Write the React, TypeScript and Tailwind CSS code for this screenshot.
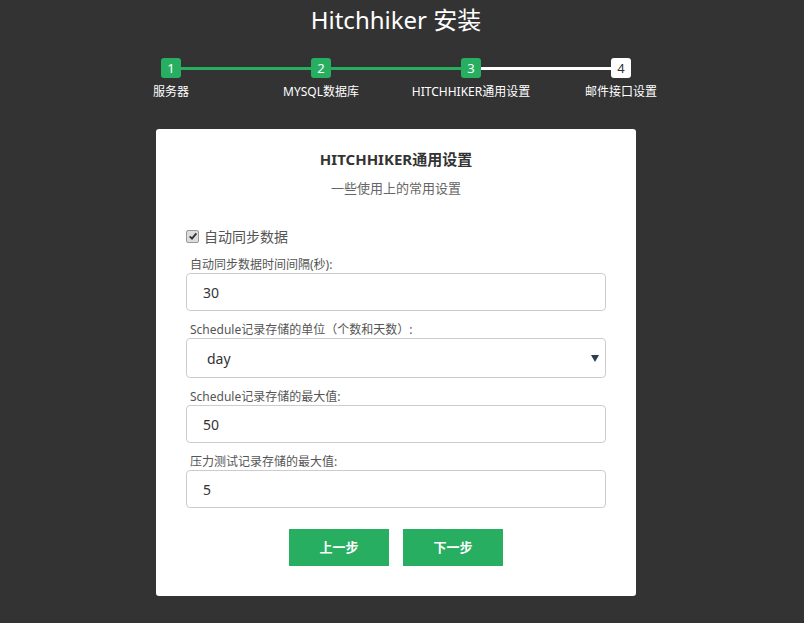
const font = { fontFamily: '"Noto Sans", "Noto Sans CJK SC", sans-serif' };

const steps = [
  { n: 1, label: "服务器", done: true },
  { n: 2, label: "MYSQL数据库", done: true },
  { n: 3, label: "HITCHHIKER通用设置", done: true },
  { n: 4, label: "邮件接口设置", done: false },
];

function StepBox({ n, done }: { n: number; done: boolean }) {
  return (
    <div
      className={`flex h-5 w-5 shrink-0 items-center justify-center rounded-[3px] text-[13px] leading-none ${
        done ? "bg-[#27ae60] text-white" : "bg-white text-[#333]"
      }`}
    >
      {n}
    </div>
  );
}

function Field({ label, value }: { label: string; value: string }) {
  return (
    <div className="mt-[11px]">
      <div className="pl-1 text-[12px] leading-4 text-[#555]">{label}</div>
      <div className="flex h-[38px] items-center rounded-[4px] border border-[#ccc] bg-white px-4 text-[14px] text-[#333]">
        {value}
      </div>
    </div>
  );
}

export default function App() {
  return (
    <div className="min-h-[623px] w-full bg-[#333]" style={font}>
      <div className="w-[792px] pt-1">
        <h1 className="text-center text-[24px] font-normal leading-8 text-white">Hitchhiker 安装</h1>

        <div className="mx-auto mt-[22px] w-[600px]">
          <div className="flex items-center px-[65px]">
            {steps.map((s, i) => (
              <div key={s.n} className={`flex items-center ${i < 3 ? "flex-1" : ""}`}>
                <StepBox n={s.n} done={s.done} />
                {i < 3 && (
                  <div className={`h-[3px] flex-1 ${i < 2 ? "bg-[#27ae60]" : "bg-white"}`} />
                )}
              </div>
            ))}
          </div>
          <div className="mt-[6px] grid grid-cols-4">
            {steps.map((s) => (
              <div key={s.n} className="text-center text-[12px] leading-4 text-white">
                {s.label}
              </div>
            ))}
          </div>
        </div>

        <div className="mx-auto mt-[29px] w-[480px] rounded-[3px] bg-white px-[30px] pt-[19px] pb-[30px]">
          <h2 className="text-center text-[15px] font-bold leading-[22px] text-[#333]">HITCHHIKER通用设置</h2>
          <p className="mt-[9px] text-center text-[13px] leading-[18px] text-[#666]">一些使用上的常用设置</p>

          <label className="mt-[29px] flex h-5 items-center gap-[5px] text-[14px] text-[#555]">
            <span className="flex h-[13px] w-[13px] items-center justify-center rounded-[2px] border border-[#999] bg-[#ddd]">
              <svg viewBox="0 0 12 12" className="h-[10px] w-[10px]">
                <path d="M2 6.5 L4.8 9.2 L10 2.8" fill="none" stroke="#333" strokeWidth="2.2" />
              </svg>
            </span>
            自动同步数据
          </label>

          <Field label="自动同步数据时间间隔(秒):" value="30" />

          <div className="mt-[11px]">
            <div className="pl-1 text-[12px] leading-4 text-[#555]">Schedule记录存储的单位（个数和天数）:</div>
            <div className="flex h-[40px] items-center justify-between rounded-[4px] border border-[#ccc] bg-white pr-[6px] pl-5 text-[14px] text-[#333]">
              <span>day</span>
              <svg viewBox="0 0 8 7" className="h-[7px] w-[8px]">
                <path d="M0 0 H8 L4 7 Z" fill="#2c3e50" />
              </svg>
            </div>
          </div>

          <Field label="Schedule记录存储的最大值:" value="50" />
          <Field label="压力测试记录存储的最大值:" value="5" />

          <div className="mt-[21px] flex justify-center gap-[14px]">
            <button className="h-[37px] w-[100px] bg-[#27ae60] text-[13px] font-bold text-white">上一步</button>
            <button className="h-[37px] w-[100px] bg-[#27ae60] text-[13px] font-bold text-white">下一步</button>
          </div>
        </div>
      </div>
    </div>
  );
}
